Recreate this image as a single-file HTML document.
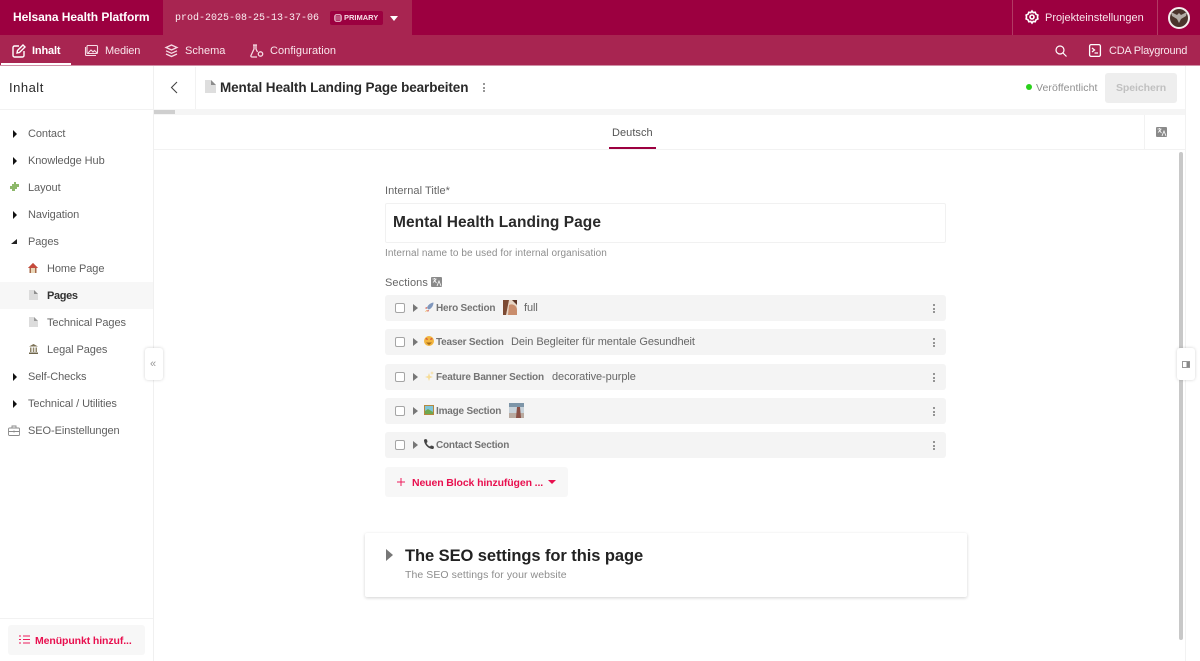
<!DOCTYPE html>
<html lang="de"><head><meta charset="utf-8"><title>Mental Health Landing Page bearbeiten</title>
<style>
html,body{margin:0;padding:0;background:#fff}
body{width:1200px;height:661px;position:relative;overflow:hidden;font-family:"Liberation Sans",sans-serif;color:#5c5c5c;filter:blur(.3px)}
.a{position:absolute}
.t{position:absolute;white-space:nowrap;line-height:16px;transform:translateY(-7px)}
.w{color:#fff}
.nav{font-size:11px;color:#5f5f5f;letter-spacing:-.08px}
.row{position:absolute;left:385px;width:561px;height:26px;background:#f4f4f4;border-radius:3px}
.cb{position:absolute;left:10px;top:8px;width:8px;height:8px;border:1px solid #a5a5a5;border-radius:2px;background:#fff}
.tri{position:absolute;width:0;height:0;border-style:solid;border-color:transparent;border-width:4px 0 4px 5px;border-left-color:#777}
.side{position:absolute;left:13px;width:0;height:0;border-style:solid;border-color:transparent;border-width:4px 0 4px 4.5px;border-left-color:#111}
.nm{position:absolute;left:51px;top:6px;font-size:10px;font-weight:bold;color:#747474;white-space:nowrap;line-height:16px;letter-spacing:-.2px}
.vl{position:absolute;top:5px;font-size:11px;color:#666;white-space:nowrap;line-height:16px;letter-spacing:-.07px}
.dots{position:absolute;width:3px;height:10px}
.dots i{display:block;width:2px;height:2px;background:#777;border-radius:50%;margin-bottom:1.500px}
svg{position:absolute;overflow:visible}
</style></head><body>

<!-- top bar -->
<div class="a" style="left:0;top:0;width:1200px;height:35px;background:#9c0040"></div>
<div class="a" style="left:163px;top:0;width:249px;height:35px;background:#a82551"></div>
<div class="a" style="left:0;top:35px;width:1200px;height:30px;background:#a82551"></div>
<div class="a" style="left:0;top:65px;width:1200px;height:1px;background:#cf8fa5"></div>
<div class="a" style="left:1012px;top:0;width:1px;height:35px;background:#b23a63"></div>
<div class="a" style="left:1157px;top:0;width:1px;height:35px;background:#b23a63"></div>
<div class="t w" style="left:13px;top:16px;font-size:12px;font-weight:bold;letter-spacing:-.07px">Helsana Health Platform</div>
<div class="t w" style="left:175px;top:18px;font-family:'Liberation Mono',monospace;font-size:10px;letter-spacing:0;color:#fbeef2">prod-2025-08-25-13-37-06</div>
<div class="a" style="left:330px;top:11px;width:53px;height:14px;background:#9c0040;border-radius:2px"></div>
<svg style="left:334px;top:14px" width="8" height="8" viewBox="0 0 8 8"><rect x=".8" y=".8" width="6.400" height="6.400" rx="1.600" fill="none" stroke="#f4d5df"/><path d="M1 3h6M1 5h6" stroke="#f4d5df" stroke-width=".7"/></svg>
<div class="t" style="left:344px;top:17px;font-size:7.500px;font-weight:bold;color:#f8dfe7;letter-spacing:0">PRIMARY</div>
<div class="a" style="left:390px;top:16px;width:0;height:0;border-left:4.500px solid transparent;border-right:4.500px solid transparent;border-top:5px solid #fff"></div>
<svg style="left:1025px;top:10px" width="14" height="14" viewBox="0 0 14 14" fill="none" stroke="#fff" stroke-width="1.600"><path d="M7 1l1.200 1.600 2-.3.800 1.900 1.900.9-.4 1.900.4 1.900-1.900.9-.8 1.900-2-.3L7 13l-1.200-1.600-2 .3-.8-1.900-1.900-.9.4-1.900-.4-1.900 1.900-.9.8-1.900 2 .3z"/><circle cx="7" cy="7" r="2"/></svg>
<div class="t" style="left:1045px;top:17px;font-size:11px;color:#f9e6ec;letter-spacing:-.02px">Projekteinstellungen</div>
<div class="a" style="left:1168px;top:7px;width:18px;height:18px;border:2px solid #f5eeee;border-radius:50%;background:#4a342c"></div>
<svg style="left:1171px;top:11px" width="16" height="13" viewBox="0 0 16 13"><path d="M8 12L6 8 1 5 0 1l4 2 2 1 2-2 2 2 2-1 4-2-1 4-5 3z" fill="#b3aca6"/></svg>

<!-- second bar -->
<div class="a" style="left:1px;top:63px;width:70px;height:2px;background:#fff"></div>
<svg style="left:12px;top:44px" width="14" height="14" viewBox="0 0 14 14" fill="none" stroke="#fff" stroke-width="1.400"><path d="M7 2H2.500A1.500 1.500 0 0 0 1 3.500v8A1.500 1.500 0 0 0 2.500 13h8A1.500 1.500 0 0 0 12 11.500V7"/><path d="M5 9l.5-2.500L11 1l2 2-5.500 5.500z"/></svg>
<div class="t w" style="left:32px;top:50px;font-size:11px;font-weight:bold;letter-spacing:-.15px">Inhalt</div>
<svg style="left:85px;top:45px" width="13" height="11" viewBox="0 0 13 11" fill="none" stroke="#f6dbe4" stroke-width="1.100"><rect x="2" y=".5" width="10.500" height="8" rx="1"/><path d="M.5 2v7.500a1 1 0 0 0 1 1H11"/><path d="M3 8l3-3 2 2 1.500-1.500L12 8"/></svg>
<div class="t" style="left:105px;top:50px;font-size:11px;color:#f9e6ec;letter-spacing:-.15px">Medien</div>
<svg style="left:165px;top:44px" width="13" height="14" viewBox="0 0 13 14" fill="none" stroke="#f6dbe4" stroke-width="1.300"><path d="M6.500 1L12 3.500 6.500 6 1 3.500z"/><path d="M1 6.800l5.500 2.500L12 6.800M1 10l5.500 2.500L12 10"/></svg>
<div class="t" style="left:185px;top:50px;font-size:11px;color:#f9e6ec;letter-spacing:0">Schema</div>
<svg style="left:250px;top:44px" width="14" height="14" viewBox="0 0 14 14" fill="none" stroke="#f6dbe4" stroke-width="1.300"><path d="M3 1h4M4 1v4L1 11.500a1 1 0 0 0 1 1.500h5M6 1v4l1.500 3"/><circle cx="10.500" cy="10" r="2.200"/></svg>
<div class="t" style="left:270px;top:50px;font-size:11px;color:#f9e6ec;letter-spacing:.05px">Configuration</div>
<svg style="left:1055px;top:45px" width="12" height="12" viewBox="0 0 12 12" fill="none" stroke="#fff" stroke-width="1.200"><circle cx="5" cy="5" r="4"/><path d="M8 8l3.500 3.500"/></svg>
<svg style="left:1089px;top:44px" width="12" height="13" viewBox="0 0 12 13" fill="none" stroke="#fff" stroke-width="1.300"><rect x=".6" y=".6" width="10.800" height="11.800" rx="1.500"/><path d="M3 4l2.500 2L3 8M5.500 9H9"/></svg>
<div class="t" style="left:1109px;top:50px;font-size:11px;color:#f9e6ec;letter-spacing:-.23px">CDA Playground</div>

<!-- sidebar -->
<div class="a" style="left:153px;top:66px;width:1px;height:595px;background:#f0f0f0"></div>
<div class="a" style="left:0;top:109px;width:153px;height:1px;background:#f2f2f2"></div>
<div class="t" style="left:9px;top:87px;font-size:13px;color:#2a2a2a;letter-spacing:.5px">Inhalt</div>
<div class="a" style="left:0;top:282px;width:153px;height:27px;background:#f7f7f7"></div>

<div class="side" style="top:130px"></div><div class="t nav" style="left:28px;top:133px">Contact</div>
<div class="side" style="top:157px"></div><div class="t nav" style="left:28px;top:160px">Knowledge Hub</div>
<svg style="left:9px;top:181px" width="11" height="11" viewBox="0 0 11 11"><path d="M1 5h2V3h2V1h2v2h3v3H8v2H6v2H3V8H1z" fill="#8db86a"/></svg>
<div class="t nav" style="left:28px;top:187px">Layout</div>
<div class="side" style="top:211px"></div><div class="t nav" style="left:28px;top:214px">Navigation</div>
<div class="a" style="left:11px;top:239px;width:0;height:0;border-left:6px solid transparent;border-bottom:5px solid #222"></div>
<div class="t nav" style="left:28px;top:241px">Pages</div>
<svg style="left:28px;top:263px" width="10" height="10" viewBox="0 0 10 10"><path d="M5 0L0 5h1.500v5h7V5H10z" fill="#a5684a"/><rect x="3" y="5" width="4" height="5" fill="#e9d5b6"/><path d="M5 0L0 5h10z" fill="#c64a3c"/></svg>
<div class="t nav" style="left:47px;top:268px">Home Page</div>
<svg style="left:29px;top:290px" width="9" height="10" viewBox="0 0 9 10"><path d="M0 0h5l4 4v6H0z" fill="#dcdcdc"/><path d="M5 0l4 4H5z" fill="#8f8f8f"/></svg>
<div class="t" style="left:47px;top:295px;font-size:11px;font-weight:bold;color:#333;letter-spacing:-.35px">Pages</div>
<svg style="left:29px;top:317px" width="9" height="10" viewBox="0 0 9 10"><path d="M0 0h5l4 4v6H0z" fill="#dcdcdc"/><path d="M5 0l4 4H5z" fill="#9a9a9a"/></svg>
<div class="t nav" style="left:47px;top:322px">Technical Pages</div>
<svg style="left:29px;top:344px" width="9" height="10" viewBox="0 0 9 10"><path d="M4.500 0L9 2.500H0z" fill="#7c7256"/><path d="M1 3.500h1.500V8H1zM3.800 3.500h1.500V8H3.800zM6.500 3.500H8V8H6.500z" fill="#8f8568"/><rect y="8.500" width="9" height="1.500" fill="#6e654b"/></svg>
<div class="t nav" style="left:47px;top:349px">Legal Pages</div>
<div class="side" style="top:373px"></div><div class="t nav" style="left:28px;top:376px">Self-Checks</div>
<div class="side" style="top:400px"></div><div class="t nav" style="left:28px;top:403px">Technical / Utilities</div>
<svg style="left:8px;top:425px" width="12" height="11" viewBox="0 0 12 11" fill="none" stroke="#8a8a8a" stroke-width=".9"><rect x=".5" y="3" width="11" height="7.500" rx="1"/><path d="M4 3V1h4v2M.5 6.500h11M6 5.500v2"/></svg>
<div class="t nav" style="left:28px;top:430px">SEO-Einstellungen</div>
<div class="a" style="left:145px;top:348px;width:18px;height:32px;background:#fff;border-radius:3px;box-shadow:0 0 3px rgba(0,0,0,.18)"></div>
<div class="t" style="left:150px;top:363px;font-size:11px;color:#999">«</div>

<div class="a" style="left:0;top:618px;width:153px;height:1px;background:#f2f2f2"></div>
<div class="a" style="left:8px;top:625px;width:137px;height:30px;background:#f7f7f7;border-radius:3px"></div>
<svg style="left:19px;top:635px" width="11" height="9" viewBox="0 0 11 9" fill="none" stroke="#ee1e5c" stroke-width="1"><path d="M0 1h2M4 1h7M0 4.500h2M4 4.500h7M0 8h2M4 8h7"/></svg>
<div class="t" style="left:35px;top:640px;font-size:10.500px;font-weight:bold;color:#e8104f;letter-spacing:-.1px">Menüpunkt hinzuf...</div>

<!-- editor header -->
<div class="a" style="left:195px;top:67px;width:1px;height:42px;background:#f2f2f2"></div>
<svg style="left:170px;top:81px" width="8" height="13" viewBox="0 0 8 13" fill="none" stroke="#444" stroke-width="1.100"><path d="M7 1L1.500 6.500 7 12"/></svg>
<svg style="left:205px;top:80px" width="11" height="13" viewBox="0 0 11 13"><path d="M0 0h6l5 5v8H0z" fill="#dedede"/><path d="M6 0l5 5H6z" fill="#8c8c8c"/></svg>
<div class="t" style="left:220px;top:87px;font-size:13.500px;font-weight:bold;color:#2a2a2a;letter-spacing:-.1px">Mental Health Landing Page bearbeiten</div>
<div class="dots" style="left:483px;top:83px"><i></i><i></i><i></i></div>
<div class="a" style="left:1026px;top:84px;width:6px;height:6px;background:#2ad11b;border-radius:50%"></div>
<div class="t" style="left:1036px;top:87px;font-size:10.500px;color:#8f8f8f;letter-spacing:.07px">Veröffentlicht</div>
<div class="a" style="left:1105px;top:73px;width:72px;height:30px;background:#eee;border-radius:3px"></div>
<div class="t" style="left:1116px;top:87px;font-size:10.500px;font-weight:bold;color:#c0c0c0;letter-spacing:-.08px">Speichern</div>
<div class="a" style="left:154px;top:109px;width:1031px;height:6px;background:#f5f5f5"></div>
<div class="a" style="left:154px;top:110px;width:21px;height:4px;background:#cfcfcf"></div>

<!-- tabs -->
<div class="a" style="left:154px;top:149px;width:1031px;height:1px;background:#f2f2f2"></div>
<div class="t" style="left:612px;top:132px;font-size:11px;color:#555;letter-spacing:.05px">Deutsch</div>
<div class="a" style="left:609px;top:147px;width:47px;height:2px;background:#9c0040"></div>
<div class="a" style="left:1144px;top:115px;width:1px;height:34px;background:#f2f2f2"></div>
<svg style="left:1156px;top:127px" width="11" height="10" viewBox="0 0 11 10"><rect width="11" height="10" rx="1" fill="#8a8a8a"/><path d="M1.500 2h4M3.500 1v1M2 5.500L5 2.500M3 3l2.500 3M6 9l2-5 2 5" stroke="#fff" stroke-width=".8" fill="none"/></svg>
<div class="a" style="left:1179px;top:152px;width:4px;height:488px;background:#c8c8c8;border-radius:2px"></div>
<div class="a" style="left:1185px;top:66px;width:1px;height:595px;background:#f2f2f2"></div>
<div class="a" style="left:1177px;top:348px;width:18px;height:32px;background:#fff;border-radius:3px;box-shadow:0 0 3px rgba(0,0,0,.18)"></div>
<svg style="left:1182px;top:361px" width="8" height="7" viewBox="0 0 8 7"><rect x=".5" y=".5" width="7" height="6" fill="#fff" stroke="#999"/><rect x="4.500" y="1" width="3" height="5" fill="#888"/></svg>

<!-- form -->
<div class="t" style="left:385px;top:190px;font-size:11px;color:#666;letter-spacing:.05px">Internal Title*</div>
<div class="a" style="left:385px;top:203px;width:559px;height:38px;border:1px solid #f1f1f1;border-radius:2px"></div>
<div class="t" style="left:393px;top:222px;font-size:15.500px;font-weight:bold;color:#2a2a2a;letter-spacing:.05px">Mental Health Landing Page</div>
<div class="t" style="left:385px;top:253px;font-size:10px;color:#8d8d8d;letter-spacing:.08px">Internal name to be used for internal organisation</div>
<div class="t" style="left:385px;top:282px;font-size:11px;color:#666;letter-spacing:.1px">Sections</div>
<svg style="left:431px;top:277px" width="11" height="10" viewBox="0 0 11 10"><rect width="11" height="10" rx="1" fill="#8a8a8a"/><path d="M1.500 2h4M3.500 1v1M2 5.500L5 2.500M3 3l2.500 3M6 9l2-5 2 5" stroke="#fff" stroke-width=".8" fill="none"/></svg>

<div class="row" style="top:295px"><div class="cb"></div><div class="tri" style="left:28px;top:9px"></div>
<svg style="left:39px;top:7px" width="10" height="11" viewBox="0 0 10 11"><path d="M9.500.5C6 1 3.500 3.500 3 6l1.500 1.500C7 7 9.500 4 9.500.5z" fill="#7f97bd"/><path d="M3 5L1 6l1.500 1zM5 8l-1 2-1-1.500z" fill="#d24a3b"/><path d="M2.500 8L1 10l2-1z" fill="#f0a030"/></svg>
<div class="nm">Hero Section</div>
<svg style="left:118px;top:5px" width="14" height="15" viewBox="0 0 14 15"><rect width="14" height="15" fill="#e8d5c4"/><path d="M0 0h6L3 15H0z" fill="#7c4a33"/><path d="M6 5c4-2 8 1 8 5v5H5z" fill="#c98d6c"/><path d="M9 0h5v5z" fill="#5b3425"/></svg>
<div class="vl" style="left:139px">full</div></div>

<div class="row" style="top:329px"><div class="cb"></div><div class="tri" style="left:28px;top:9px"></div>
<svg style="left:39px;top:7px" width="10" height="10" viewBox="0 0 10 10"><circle cx="5" cy="5" r="5" fill="#f2b53e"/><path d="M2 6.500h6L5 9z" fill="#a36a1c"/><path d="M1 3l2-1 1 2zM9 3L7 2 6 4z" fill="#d24a3b"/></svg>
<div class="nm">Teaser Section</div>
<div class="vl" style="left:126px">Dein Begleiter für mentale Gesundheit</div></div>

<div class="row" style="top:364px"><div class="cb"></div><div class="tri" style="left:28px;top:9px"></div>
<svg style="left:39px;top:7px" width="10" height="10" viewBox="0 0 10 10"><path d="M5 2l1 3 3 1-3 1-1 3-1-3-3-1 3-1z" fill="#f6dc96"/><path d="M8 0l.5 1.500L10 2l-1.500.5L8 4l-.5-1.500L6 2l1.500-.5z" fill="#f6dc96"/></svg>
<div class="nm">Feature Banner Section</div>
<div class="vl" style="left:167px">decorative-purple</div></div>

<div class="row" style="top:398px"><div class="cb"></div><div class="tri" style="left:28px;top:9px"></div>
<svg style="left:39px;top:7px" width="10" height="10" viewBox="0 0 10 10"><rect width="10" height="10" fill="#b5893f"/><rect x="1" y="1" width="8" height="8" fill="#7fc5d8"/><path d="M1 9V6l3-2 5 3v2z" fill="#70a94f"/></svg>
<div class="nm">Image Section</div>
<svg style="left:124px;top:5px" width="15" height="15" viewBox="0 0 15 15"><rect width="15" height="15" fill="#c7d2da"/><rect y="0" width="15" height="4" fill="#7d95a8"/><rect y="10" width="15" height="5" fill="#b9aaa0"/><path d="M8 4h3l1 11H7z" fill="#8a5045"/></svg></div>

<div class="row" style="top:432px"><div class="cb"></div><div class="tri" style="left:28px;top:9px"></div>
<svg style="left:39px;top:7px" width="10" height="10" viewBox="0 0 10 10"><path d="M1 0L3 .5 3.500 3 2.500 4c.5 1.500 2 3 3.500 3.500l1-1 2.500.5.500 2-1 1C4 10 0 5 0 1z" fill="#444"/></svg>
<div class="nm">Contact Section</div></div>

<div class="dots" style="left:933px;top:304px"><i></i><i></i><i></i></div>
<div class="dots" style="left:933px;top:338px"><i></i><i></i><i></i></div>
<div class="dots" style="left:933px;top:373px"><i></i><i></i><i></i></div>
<div class="dots" style="left:933px;top:407px"><i></i><i></i><i></i></div>
<div class="dots" style="left:933px;top:441px"><i></i><i></i><i></i></div>

<div class="a" style="left:385px;top:467px;width:183px;height:30px;background:#f7f7f7;border-radius:3px"></div>
<svg style="left:396px;top:477px" width="10" height="10" viewBox="0 0 10 10" stroke="#ee1e5c" stroke-width="1"><path d="M5 1v8M1 5h8"/></svg>
<div class="t" style="left:412px;top:482px;font-size:10.500px;font-weight:bold;color:#e8104f;letter-spacing:-.12px">Neuen Block hinzufügen ...</div>
<div class="a" style="left:548px;top:480px;width:0;height:0;border-left:4px solid transparent;border-right:4px solid transparent;border-top:4px solid #e8104f"></div>

<!-- SEO card -->
<div class="a" style="left:365px;top:533px;width:602px;height:64px;background:#fff;border-radius:2px;box-shadow:0 1px 3px rgba(0,0,0,.18)"></div>
<div class="a" style="left:386px;top:549px;width:0;height:0;border-top:6.500px solid transparent;border-bottom:6.500px solid transparent;border-left:7px solid #777"></div>
<div class="t" style="left:405px;top:555px;font-size:16.500px;font-weight:bold;color:#222;letter-spacing:-.07px">The SEO settings for this page</div>
<div class="t" style="left:405px;top:574px;font-size:10.500px;color:#8d8d8d;letter-spacing:.07px">The SEO settings for your website</div>
</body></html>
